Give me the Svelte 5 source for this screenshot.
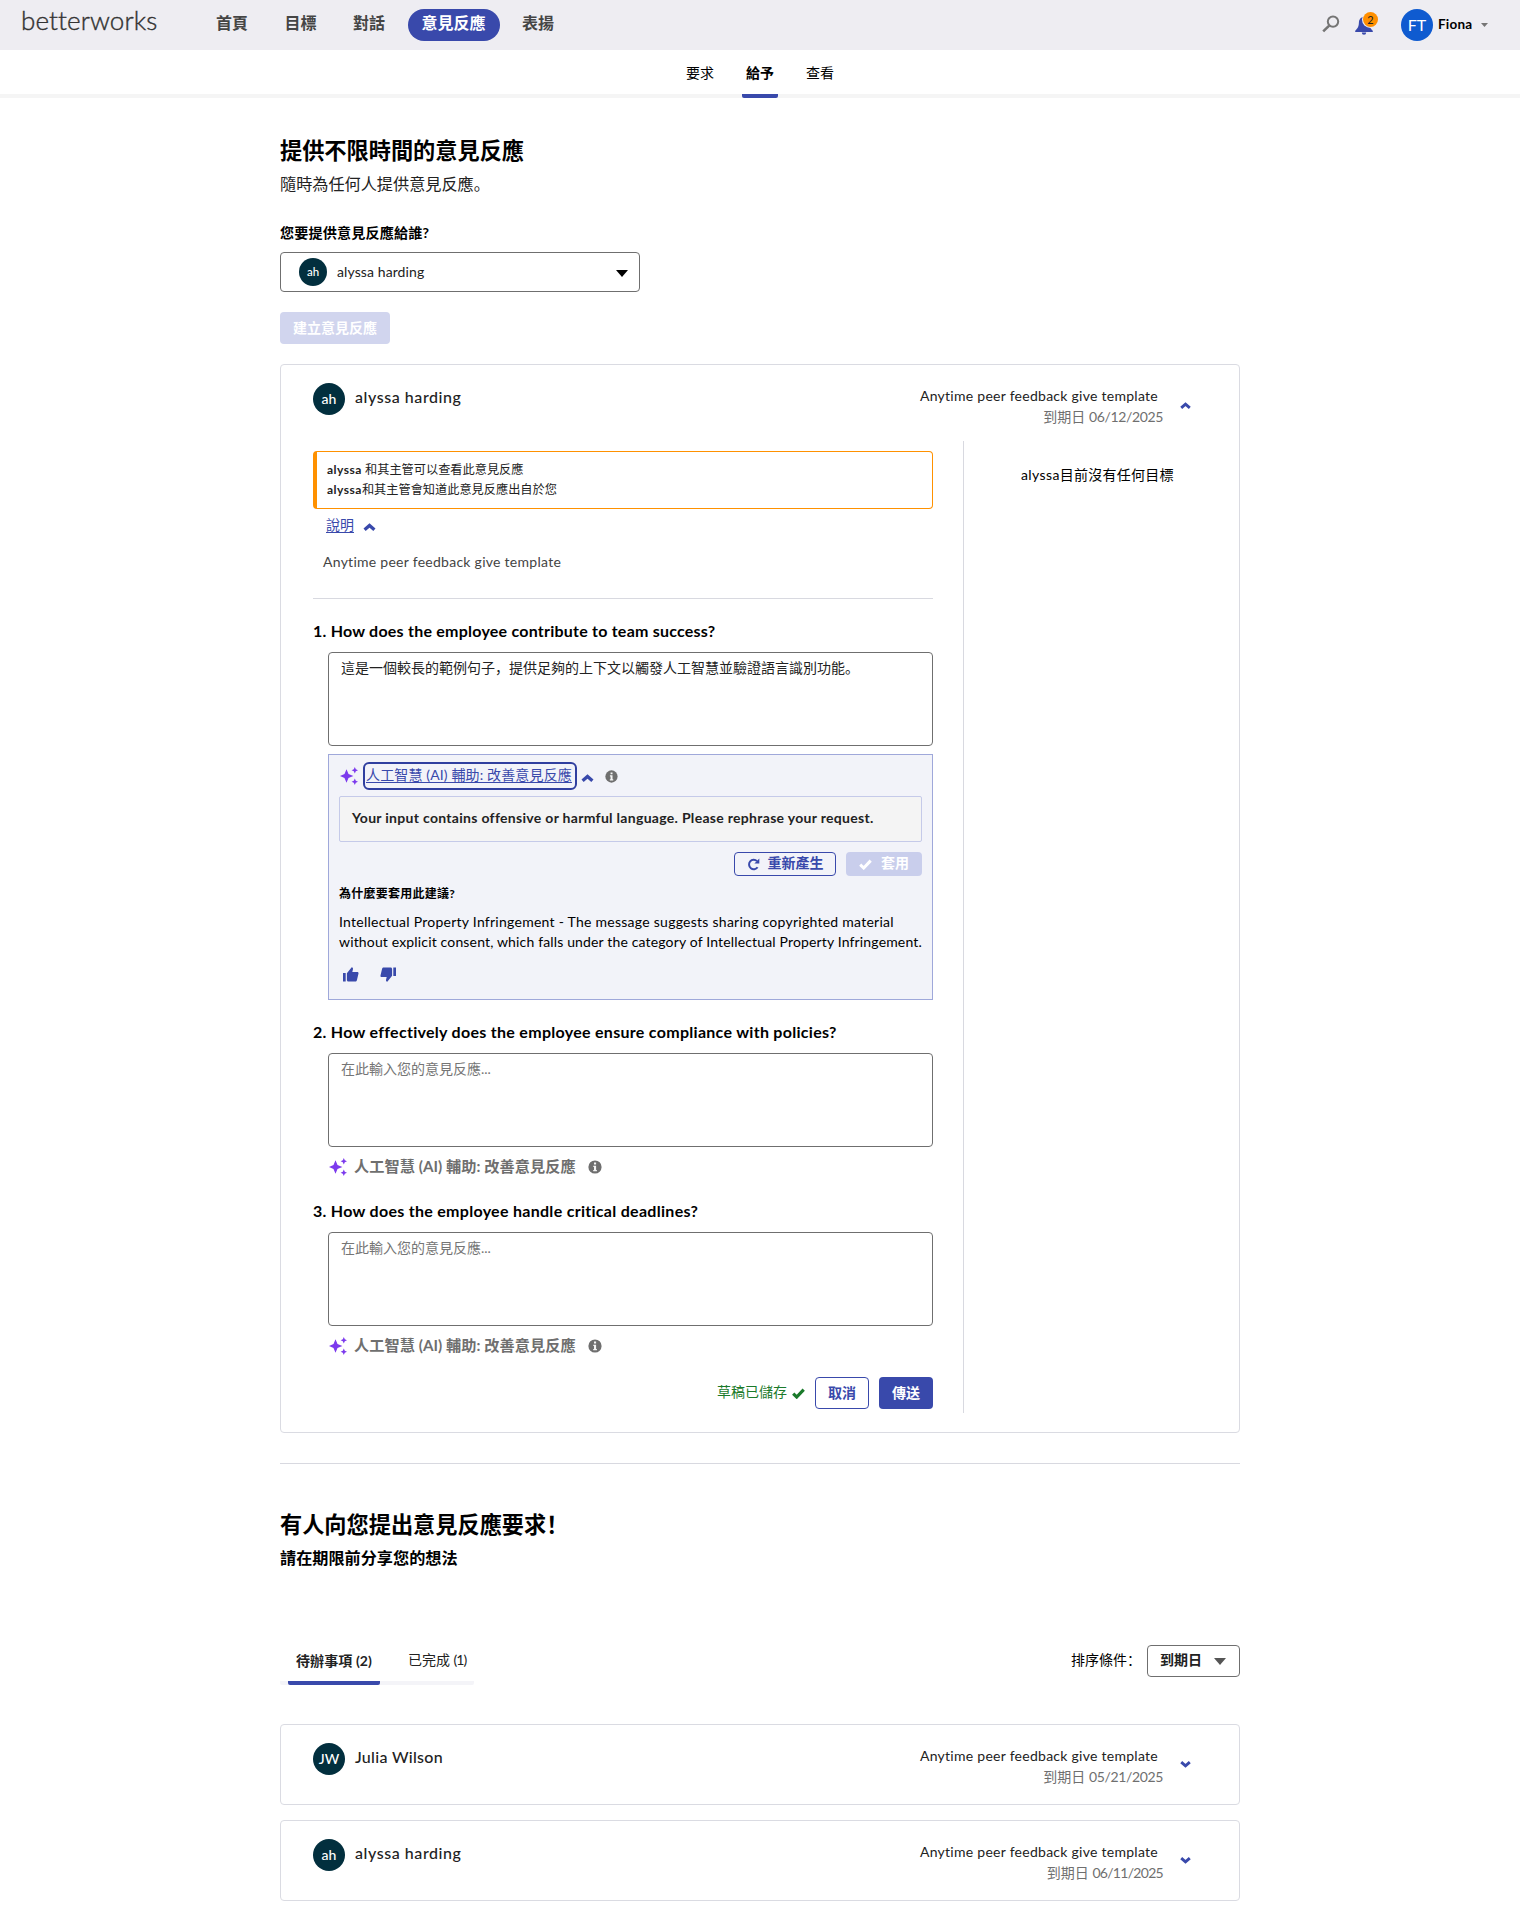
<script>
  const nav = ['首頁', '目標', '對話', '意見反應', '表揚'];
  const subnav = ['要求', '給予', '查看'];
  const requests = [
    { initials: 'JW', name: 'Julia Wilson', due: '05/21/2025', cls: 'wide' },
    { initials: 'ah', name: 'alyssa harding', due: '06/11/2025', cls: 'slim' }
  ];
  const aiLabel = '人工智慧 (AI) 輔助: 改善意見反應';
  const questions = [
    { text: '2. How effectively does the employee ensure compliance with policies?', cls: 'q2' },
    { text: '3. How does the employee handle critical deadlines?', cls: 'q3' }
  ];
</script>

{#snippet chevron(cls, up)}
  <svg class={cls} viewBox="0 0 12 8">
    <path d={up ? 'M1.1 6.700 6 2.400l4.900 4.300' : 'M1.100 1.300 6 5.600l4.900-4.300'} fill="none" stroke="#3949ab" stroke-width="3.300" />
  </svg>
{/snippet}

{#snippet sparkle()}
  <svg class="sparkle" viewBox="0 0 18 18" fill="#7c3aed">
    <path d="M6.500 2.200 8.500 7.100 13.400 9 8.500 10.900 6.500 15.800 4.500 10.900-.2 9l4.700-1.900z" />
    <path d="M14.800 0l1 2.200 2.200 1-2.200 1-1 2.200-1-2.200-2.200-1 2.200-1z" />
    <path d="M14.800 11.600l1 2.200 2.200 1-2.200 1-1 2.200-1-2.200-2.200-1 2.200-1z" />
  </svg>
{/snippet}

{#snippet info(cls)}
  <svg class={cls} viewBox="0 0 14 14">
    <circle cx="7" cy="7" r="6.6" fill="#6f6f6f" />
    <path d="M6 2.6h2.1v1.900H6zM5.300 5.700h2.800v4.200h.8v1.300H5.200V9.900H6V7h-.7z" fill="#f5f5f5" />
  </svg>
{/snippet}

{#snippet head(initials, name, due, open, cls)}
  <header class="head">
    <span class="avatar">{initials}</span>
    <span class="person" class:loose={initials === 'ah'}>{name}</span>
    <div class="meta">
      <div class="tpl">Anytime peer feedback give template</div>
      <div class="due">到期日 <span class={cls}>{due}</span></div>
    </div>
    {@render chevron(open ? 'toggle' : 'toggle down', open)}
  </header>
{/snippet}

<nav class="topbar">
  <span class="logo">betterworks</span>
  <div class="links">
    {#each nav as item}
      <span class="link" class:on={item === '意見反應'}>{item}</span>
    {/each}
  </div>
  <svg class="search" viewBox="0 0 18 18" fill="none" stroke="#757575">
    <circle cx="11" cy="6.6" r="5.2" stroke-width="2" />
    <path d="M7.2 10.6 1.2 16.4" stroke-width="2.6" />
  </svg>
  <div class="bell">
    <svg viewBox="0 0 18 19" fill="#3949ab">
      <path d="M9 .8c-3.600.4-5 3-5.100 6C3.700 11 2.600 12.600.2 14.700V16h17.600v-1.300c-2.400-2.100-3.500-3.700-3.700-7.900C14 3.800 12.600 1.200 9 .8zM6.800 16.600h4.400a2.200 2.200 0 0 1-4.400 0z" />
    </svg>
    <span class="count">2</span>
  </div>
  <span class="me">FT</span>
  <span class="user">Fiona</span>
  <svg class="tick" viewBox="0 0 7 4"><path d="M0 0h7L3.500 4z" fill="#757575" /></svg>
</nav>

<div class="subnav">
  {#each subnav as item}
    <span class="sub" class:cur={item === '給予'}>{item}</span>
  {/each}
</div>

<main>
  <h1>提供不限時間的意見反應</h1>
  <p class="lead">隨時為任何人提供意見反應。</p>
  <div class="label">您要提供意見反應給誰?</div>
  <div class="picker">
    <span class="avatar small">ah</span>
    <span class="picked">alyssa harding</span>
    <svg class="caret" viewBox="0 0 12 7"><path d="M0 0h12L6 7z" fill="#000" /></svg>
  </div>
  <button class="create">建立意見反應</button>

  <section class="card">
    {@render head('ah', 'alyssa harding', '06/12/2025', true, 'wide')}
    <div class="body">
      <div class="form">
        <div class="notice">
          <div><b>alyssa</b> 和其主管可以查看此意見反應</div>
          <div><b>alyssa</b>和其主管會知道此意見反應出自於您</div>
        </div>
        <div class="explain"><span>說明</span>{@render chevron('chev', true)}</div>
        <div class="desc tpl">Anytime peer feedback give template</div>

        <h3 class="q1">1. How does the employee contribute to team success?</h3>
        <div class="area">這是一個較長的範例句子，提供足夠的上下文以觸發人工智慧並驗證語言識別功能。</div>

        <div class="panel">
          <div class="panel-head">
            {@render sparkle()}
            <span class="focus"><span>{aiLabel}</span></span>
            {@render chevron('chev', true)}
            {@render info('info')}
          </div>
          <div class="warning">Your input contains offensive or harmful language. Please rephrase your request.</div>
          <div class="actions">
            <button class="regen">
              <svg viewBox="0 0 13 13"><path d="M10.600 9.200A4.700 4.700 0 1 1 10 3.100" fill="none" stroke="#3949ab" stroke-width="2" /><path d="M12.300.6v5H7.400z" fill="#3949ab" /></svg>
              重新產生
            </button>
            <button class="apply">
              <svg viewBox="0 0 13 11"><path d="M1.200 5.600 4.700 9l7-7.400" fill="none" stroke="#fff" stroke-width="3" /></svg>
              套用
            </button>
          </div>
          <div class="why">為什麼要套用此建議?</div>
          <div class="reason">
            <div class="r1">Intellectual Property Infringement - The message suggests sharing copyrighted material</div>
            <div class="r2">without explicit consent, which falls under the category of Intellectual Property Infringement.</div>
          </div>
          <div class="thumbs">
            <svg viewBox="0 0 16 15" fill="#3949ab"><path d="M0 6h2.700v8.500H0zM3.900 6.200 8.700.2c1.200.3 1.500 1.200 1.200 2.300L9.300 5h4.900c1 0 1.500.7 1.300 1.600l-1.600 6.600c-.2.8-.8 1.300-1.600 1.300H5.400c-.9 0-1.500-.6-1.500-1.500z" /></svg>
            <svg viewBox="0 0 16 15" fill="#3949ab"><path d="M16 9h-2.700V.5H16zM12.100 8.800 7.300 14.800c-1.200-.3-1.500-1.200-1.200-2.300L6.700 10H1.800C.8 10 .3 9.300.5 8.400L2.100 1.800C2.300 1 2.900.5 3.700.5h6.900c.9 0 1.500.6 1.500 1.500z" /></svg>
          </div>
        </div>

        {#each questions as q}
          <h3 class={q.cls}>{q.text}</h3>
          <div class="area hint">在此輸入您的意見反應...</div>
          <div class="assist">
            {@render sparkle()}
            <span>{aiLabel}</span>
            {@render info('info big')}
          </div>
        {/each}

        <div class="submit">
          <span class="saved">草稿已儲存</span>
          <svg class="ok" viewBox="0 0 13 11"><path d="M1.200 5.600 4.700 9l7-7.400" fill="none" stroke="#1b7a2b" stroke-width="3.200" /></svg>
          <button class="cancel">取消</button>
          <button class="send">傳送</button>
        </div>
      </div>
      <aside><span>alyssa</span>目前沒有任何目標</aside>
    </div>
  </section>

  <hr />
  <h1 class="second">有人向您提出意見反應要求！</h1>
  <p class="lead strong">請在期限前分享您的想法</p>

  <div class="filter">
    <div class="tabs">
      <span class="tab active">待辦事項 (2)</span>
      <span class="tab">已完成 <span class="total">(1)</span></span>
    </div>
    <div class="sort">
      <span class="sort-label">排序條件：</span>
      <div class="sort-box">到期日<svg class="caret" viewBox="0 0 12 7"><path d="M0 0h12L6 7z" fill="#555" /></svg></div>
    </div>
  </div>

  <div class="list">
    {#each requests as r}
      <section class="card">{@render head(r.initials, r.name, r.due, false, r.cls)}</section>
    {/each}
  </div>
</main>

<style>
  :global(body) {
    margin: 0;
    background: #fff;
    color: #000;
    font: 14px/20px Lato, 'Noto Sans CJK SC', sans-serif;
  }
  :global(#app) { min-height: 1931px; }
  h1, h3, p { margin: 0; }
  button {
    box-sizing: border-box;
    border: 0;
    padding: 0;
    border-radius: 4px;
    display: flex;
    align-items: center;
    justify-content: center;
    font: 700 14px/20px Lato, 'Noto Sans CJK SC', sans-serif;
  }
  svg { flex: none; display: block; }

  .topbar {
    height: 50px;
    box-sizing: border-box;
    background: #eeedf2;
    display: flex;
    align-items: flex-start;
    padding-left: 21px;
  }
  .logo {
    width: 181px;
    padding-top: 4px;
    font: 300 26px/32px Lato, sans-serif;
    letter-spacing: 0.1px;
    color: #333;
    -webkit-text-stroke: 0.4px #333;
  }
  .links { display: flex; gap: 8.5px; padding-top: 9px; }
  .link {
    box-sizing: border-box;
    font-size: 16px;
    line-height: 27px;
    height: 32px;
    padding: 0 14px;
    border-radius: 16px;
    font-weight: 700;
    color: #454545;
  }
  .link.on { background: #3949ab; color: #fff; }
  .search { width: 18px; height: 18px; margin: 15px 0 0 auto; }
  .bell { position: relative; margin: 16px 0 0 15px; width: 18px; height: 19px; }
  .bell svg { width: 18px; height: 19px; }
  .count {
    position: absolute;
    left: 8px;
    top: -4px;
    width: 15px;
    height: 15px;
    border-radius: 50%;
    background: #ff8f00;
    box-shadow: 0 0 0 1px #eeedf2;
    text-align: center;
    font-size: 11px;
    line-height: 15px;
    color: #222;
  }
  .me {
    margin: 9px 0 0 28px;
    width: 32px;
    height: 32px;
    border-radius: 50%;
    background: #0f5bd0;
    color: #fff;
    font-size: 16px;
    line-height: 32px;
    text-align: center;
  }
  .user { margin: 14px 0 0 5px; width: 43px; font-weight: 700; font-size: 13.5px; letter-spacing: 0.2px; }
  .tick { width: 7px; height: 4px; margin: 23px 32px 0 0; }

  .subnav {
    height: 48px;
    box-sizing: border-box;
    display: flex;
    justify-content: center;
    gap: 24px;
    background: linear-gradient(#f5f5f5, #f5f5f5) bottom / 100% 4px no-repeat;
  }
  .sub { padding: 13px 4px 0; height: 35px; box-sizing: border-box; flex: none; }
  .sub.cur {
    font-weight: 700;
    height: 48px;
    background: linear-gradient(#3949ab, #3949ab) bottom / 100% 4px no-repeat;
    border-radius: 0 0 2px 2px;
  }

  main { width: 960px; margin: 0 auto; padding-top: 38px; }
  h1 { font-size: 22.2px; line-height: 27px; padding-top: 1px; font-weight: 700; white-space: nowrap; }
  .lead { margin-top: 8px; font-size: 16.15px; line-height: 24px; color: #222; }
  .lead.strong { font-weight: 700; color: #000; }
  .label { margin-top: 27px; font-weight: 700; font-size: 14.1px; letter-spacing: 0.15px; }
  .picker {
    box-sizing: border-box;
    width: 360px;
    height: 40px;
    margin-top: 9px;
    border: 1px solid #6f6f6f;
    border-radius: 4px;
    display: flex;
    align-items: center;
    padding: 0 11px 0 18px;
  }
  .avatar {
    flex: none;
    width: 32px;
    height: 32px;
    border-radius: 50%;
    background: #022f3e;
    color: #fff;
    font-size: 14px;
    font-weight: 500;
    line-height: 32px;
    text-align: center;
  }
  .avatar.small { width: 28px; height: 28px; line-height: 28px; font-size: 11.5px; }
  .picked { margin-left: 10px; color: #222; letter-spacing: 0.1px; }
  .caret { width: 12px; height: 7px; margin: 2px 0 0 auto; }
  .create { width: 110px; height: 32px; margin-top: 20px; background: #d1d5ee; color: #fff; }

  .card { box-sizing: border-box; border: 1px solid #dadbe2; border-radius: 4px; }
  .create + .card { margin-top: 20px; height: 1069px; }
  .head { height: 79px; box-sizing: border-box; padding: 18px 48px 0 32px; display: flex; }
  .body { display: flex; height: 972px; margin-top: -3px; }
  .person {
    margin: 4px 0 0 10px;
    font-size: 16px;
    font-weight: 500;
    letter-spacing: 0.3px;
    color: #222;
  }
  .person.loose { letter-spacing: 0.56px; }
  .meta { margin: 2px 17px 0 auto; text-align: right; line-height: 21px; }
  .tpl { color: #222; letter-spacing: 0.27px; }
  .meta .tpl { padding-right: 5px; }
  .due { color: #6f6f6f; }
  .due .wide { letter-spacing: -0.35px; }
  .due .slim { letter-spacing: -0.7px; }
  .toggle { width: 11px; height: 7px; margin-top: 19px; }
  .toggle.down { margin-top: 18px; }

  .form { width: 620px; margin-left: 32px; padding-top: 10px; }
  .notice {
    box-sizing: border-box;
    height: 58px;
    border: 1px solid #ff9100;
    border-left-width: 4px;
    border-radius: 4px;
    padding: 8px 10px;
    font-size: 12.2px;
    color: #222;
  }
  .notice b { font-size: 12px; letter-spacing: 0.5px; }
  .explain { margin-top: 6px; padding-left: 13px; display: flex; gap: 9px; color: #3949ab; }
  .explain span { text-decoration: underline; text-underline-offset: 2px; }
  .chev { width: 13px; height: 8px; margin-top: 8px; }
  .desc { margin-top: 17px; padding: 0 0 26px 10px; border-bottom: 1px solid #d8d9e0; color: #444; }
  h3 { font-size: 16px; line-height: 20px; font-weight: 700; white-space: nowrap; letter-spacing: 0.29px; }
  h3.q1, h3.q2 { margin-top: 22px; }
  h3.q1 { letter-spacing: 0.23px; }
  h3.q3 { margin-top: 24px; }
  .area {
    box-sizing: border-box;
    height: 94px;
    margin: 11px 0 0 15px;
    border: 1px solid #6f6f6f;
    border-radius: 4px;
    padding: 5px 12px;
    color: #222;
  }
  .hint { color: #757575; }
  .panel {
    box-sizing: border-box;
    height: 246px;
    margin: 8px 0 0 15px;
    border: 1px solid #9fa8da;
    background: #f2f3f9;
    padding: 7px 10px 0;
  }
  .panel-head { display: flex; height: 28px; }
  .sparkle { width: 18px; height: 18px; }
  .panel-head .sparkle { margin: 5px 5px 0 1px; }
  .focus {
    box-sizing: border-box;
    width: 214px;
    height: 28px;
    border: 2px solid #303f9f;
    border-radius: 6px;
    padding: 1px 0 0 1px;
    color: #3949ab;
    white-space: nowrap;
    letter-spacing: 0.14px;
  }
  .focus span { text-decoration: underline; text-underline-offset: 2px; }
  .panel-head .chev { margin: 12px 11px 0 4px; }
  .info { width: 13px; height: 13px; margin-top: 8px; }
  .info.big { width: 14px; height: 14px; margin: 3px 0 0 12px; }
  .warning {
    box-sizing: border-box;
    height: 46px;
    margin-top: 6px;
    border: 1px solid #c5cae9;
    border-radius: 2px;
    background: #f4f4f4;
    padding: 11px 12px;
    font-weight: 700;
    color: #222;
    white-space: nowrap;
    letter-spacing: 0.3px;
  }
  .actions { display: flex; justify-content: flex-end; gap: 10px; margin-top: 10px; }
  .actions button { height: 24px; padding-bottom: 2px; }
  .actions svg { width: 13px; height: 13px; margin-top: 2px; }
  .regen { width: 102px; gap: 8px; border: 1px solid #3949ab; color: #3949ab; background: transparent; }
  .apply { width: 76px; gap: 9px; background: #c9ceec; color: #fff; }
  .actions .apply svg { height: 11px; }
  .why { margin-top: 8px; font-size: 12px; font-weight: 700; letter-spacing: 0.25px; }
  .reason { margin-top: 8px; white-space: nowrap; }
  .r1 { letter-spacing: 0.26px; }
  .r2 { letter-spacing: 0.155px; }
  .thumbs { display: flex; gap: 21px; padding: 15px 0 0 4px; }
  .thumbs svg { width: 16px; height: 15px; }
  .assist {
    display: flex;
    margin: 10px 0 0 15px;
    height: 20px;
    font-size: 15.2px;
    font-weight: 700;
    line-height: 18px;
    letter-spacing: 0.05px;
    color: #6f6f6f;
  }
  .assist .sparkle { margin: 1px 7px 0 1px; }
  .submit { display: flex; margin-top: 21px; height: 32px; align-items: center; justify-content: flex-end; }
  .saved { color: #1b7a2b; margin: 0 5px 2px 0; }
  .ok { width: 13px; height: 11px; margin-right: 10px; }
  .submit button { width: 54px; height: 32px; }
  .cancel { border: 1px solid #3949ab; color: #3949ab; background: #fff; margin-right: 10px; }
  .send { background: #3949ab; color: #fff; }
  aside {
    margin-left: 30px;
    border-left: 1px solid #d8d9e0;
    padding: 24px 0 0 57px;
    white-space: nowrap;
    letter-spacing: 0.25px;
  }
  aside span { letter-spacing: 0.4px; }

  hr { height: 1px; border: 0; margin: 30px 0 0; background: #d8d9e0; }
  .second { margin-top: 46px; }
  .filter { display: flex; justify-content: space-between; align-items: flex-start; margin-top: 75px; height: 40px; }
  .tabs {
    display: flex;
    width: 194px;
    height: 40px;
    box-sizing: border-box;
    padding-left: 8px;
    background: linear-gradient(#f4f4f8, #f4f4f8) bottom / 100% 4px no-repeat;
    border-radius: 2px;
  }
  .tab { padding: 5px 0 0 28px; color: #222; white-space: nowrap; }
  .total { letter-spacing: -1px; }
  .tab.active {
    width: 92px;
    box-sizing: border-box;
    padding: 6px 0 0 8px;
    font-weight: 700;
    letter-spacing: 0.1px;
    background: linear-gradient(#3949ab, #3949ab) bottom / 100% 4px no-repeat;
    border-radius: 2px;
  }
  .sort { display: flex; }
  .sort-label { margin: 5px 6px 0 0; }
  .sort-box {
    box-sizing: border-box;
    width: 93px;
    height: 32px;
    border: 1px solid #6f6f6f;
    border-radius: 4px;
    display: flex;
    align-items: center;
    padding: 0 13px 2px 12px;
    font-weight: 700;
    color: #222;
  }
  .list { display: flex; flex-direction: column; gap: 15px; margin-top: 39px; }
</style>
